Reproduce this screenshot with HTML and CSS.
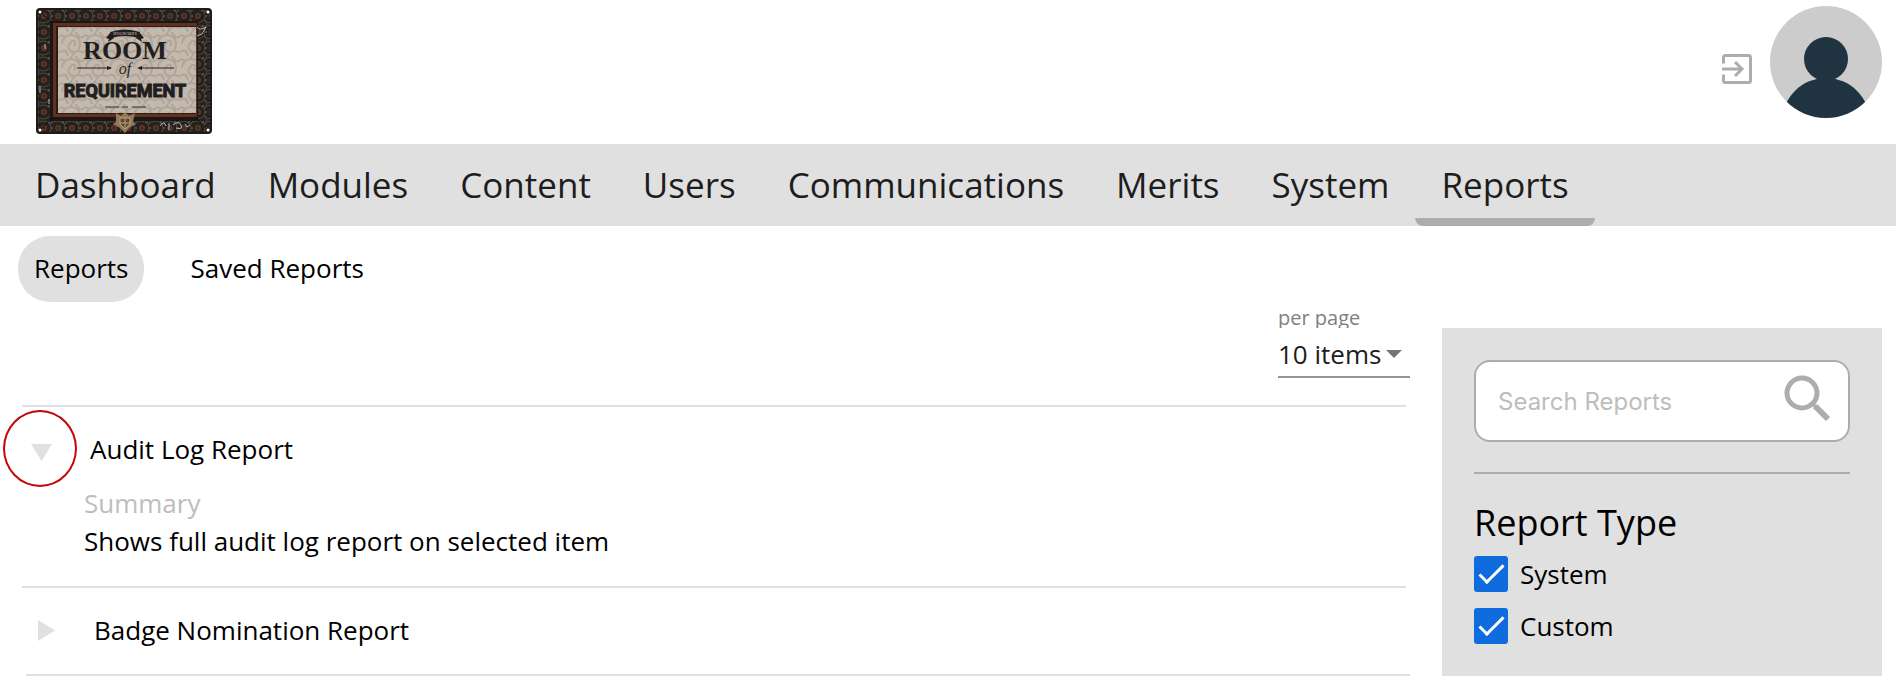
FILE: index.html
```html
<!DOCTYPE html>
<html lang="en">
<head>
    <meta charset="UTF-8">
    <meta name="viewport" content="width=device-width, initial-scale=1.0">
    <title>Reports</title>
    <link rel="stylesheet" href="styles.css">
</head>
<body>

<header class="header">
    <a class="logo" href="#" aria-label="Room of Requirement">
        <svg width="176" height="126" viewBox="0 0 176 126">
            <defs>
                <pattern id="carving" width="14" height="16" patternUnits="userSpaceOnUse">
                    <rect width="14" height="16" fill="#25211f"/>
                    <path d="M0 4q7-6 14 0M0 12q7 6 14 0M3 0q-6 8 0 16" fill="none" stroke="#50493f" stroke-width="1"/>
                    <circle cx="8" cy="8" r="3" fill="#5e3425"/>
                    <circle cx="8" cy="8" r="1" fill="#2a1d18"/>
                    <path d="M1 8h2M13 1v2" stroke="#81766a" stroke-width="1"/>
                </pattern>
                <pattern id="damask" width="24" height="24" patternUnits="userSpaceOnUse">
                    <rect width="24" height="24" fill="#c4b9ad"/>
                    <path d="M2 12c0-12 18-12 18 0s-14 9-11 1 9-3 5 1M12 0c-2 5-8 5-12 3M12 24c3-6 8-6 12-3M0 20q6-4 8 4M24 4q-5 4-8-4" fill="none" stroke="#b1a499" stroke-width="2"/>
                </pattern>
            </defs>
            <rect width="176" height="126" rx="4" fill="#1e1b1a"/>
            <rect x="2" y="2" width="172" height="122" rx="3" fill="url(#carving)"/>
            <rect x="14" y="13" width="148" height="100" fill="#1b1716"/>
            <rect x="17" y="15" width="144" height="94" fill="#61301f"/>
            <path d="M4 4l13 11M172 4l-13 11M4 122l13-13M172 122l-13-13" stroke="#141211" stroke-width="1"/>
            <rect x="20" y="18" width="140" height="88" fill="#2e1b15"/>
            <rect x="22" y="19" width="138" height="86" fill="url(#damask)"/>
            <circle cx="4" cy="4" r="1.5" fill="#fff"/>
            <circle cx="172" cy="4" r="1.5" fill="#fff"/>
            <circle cx="4" cy="122" r="1.5" fill="#fff"/>
            <circle cx="172" cy="122" r="1.5" fill="#fff"/>
            <path d="M74 24q15-5 30 0l-1 6q-14-4-28 0z" fill="#211e1e"/>
            <path d="M74 25l-4 5 3 1-1 3 6-4M104 25l4 5-3 1 1 3-6-4" fill="#211e1e"/>
            <text class="logo-ribbon" x="89" y="27">HOGWARTS</text>
            <text class="logo-room" x="89" y="51">ROOM</text>
            <text class="logo-of" x="89" y="66">of</text>
            <path d="M41 60h34M103 60h35" stroke="#29211f" stroke-width="1"/>
            <path d="M71 58l5 2-5 2zM106 58l-5 2 5 2z" fill="#211e1e"/>
            <text class="logo-requirement" x="89" y="89">REQUIREMENT</text>
            <path d="M69 99h14M96 99h14M86 99h6" stroke="#38302d" stroke-width="1"/>
            <path d="M80 105l5 3 4-4 4 4 6-3-2 9 3 2-7 4-4 5-5-5-7-4 3-2z" fill="#92795a"/>
            <path d="M84 110h10v6l-5 5-5-5zM89 110v11M84 115h10" fill="#5c4936" stroke="#bda27b" stroke-width="1"/>
            <path d="M124 118q4-6 6 0M133 115v7M137 117q6-5 8 0t-5 3M149 116l2 3 3-2M161 19q3 4 9 0l-4 7-5 2M9 36v5M4 78v7M13 91v5" fill="none" stroke="#b9b9b5" stroke-width="1"/>
        </svg>
    </a>
    <div class="account">
        <button class="logout" type="button" aria-label="Log out">
            <svg width="30" height="30" viewBox="0 0 30 30" fill="none" stroke="#adadad" stroke-width="3">
                <path d="M1.5 9.5v-6q0-2 2-2h23q2 0 2 2v23q0 2-2 2h-23q-2 0-2-2v-6"/>
                <path d="M0 15h20M13 8l7 7-7 7"/>
            </svg>
        </button>
        <a class="avatar" href="#" aria-label="Profile">
            <svg width="112" height="112" viewBox="0 0 112 112">
                <defs>
                    <clipPath id="avatar-clip"><circle cx="56" cy="56" r="56"/></clipPath>
                </defs>
                <g clip-path="url(#avatar-clip)">
                    <rect width="112" height="112" fill="#ccc"/>
                    <circle cx="56" cy="53" r="22" fill="#203340"/>
                    <circle cx="56" cy="116" r="44" fill="#203340"/>
                </g>
            </svg>
        </a>
    </div>
</header>

<nav class="main-nav">
    <a href="#">Dashboard</a>
    <a href="#">Modules</a>
    <a href="#">Content</a>
    <a href="#">Users</a>
    <a href="#">Communications</a>
    <a href="#">Merits</a>
    <a href="#">System</a>
    <a href="#" class="active">Reports</a>
</nav>

<nav class="sub-nav">
    <a href="#" class="active">Reports</a>
    <a href="#">Saved Reports</a>
</nav>

<main class="page">
    <section class="content">
        <div class="pager">
            <label for="per-page">per page</label>
            <div class="pager-select">
                <select id="per-page">
                    <option>10 items</option>
                    <option>25 items</option>
                    <option>50 items</option>
                </select>
            </div>
        </div>

        <div class="report open">
            <div class="report-head">
                <button class="toggle" type="button" aria-label="Collapse" aria-expanded="true">
                    <svg width="24" height="24" viewBox="0 0 24 24"><path d="M1 7h21L11.5 24z" fill="#e0e0e0"/></svg>
                    <span class="ring"></span>
                </button>
                <span>Audit Log Report</span>
            </div>
            <div class="report-body">
                <div class="report-label">Summary</div>
                <div>Shows full audit log report on selected item</div>
            </div>
        </div>

        <div class="report">
            <div class="report-head">
                <button class="toggle" type="button" aria-label="Expand" aria-expanded="false">
                    <svg width="24" height="24" viewBox="0 0 24 24"><path d="M4 2v21l17-10.500z" fill="#e0e0e0"/></svg>
                </button>
                <span>Badge Nomination Report</span>
            </div>
        </div>
    </section>

    <aside class="filters">
        <div class="search">
            <input type="text" placeholder="Search Reports" aria-label="Search Reports">
            <svg class="search-icon" width="48" height="48" viewBox="0 0 48 48" fill="none" stroke="#adadad">
                <circle cx="19" cy="19" r="15" stroke-width="5"/>
                <path d="M29 29l5 5" stroke-width="3"/>
                <path d="M32 32l13 13" stroke-width="6"/>
            </svg>
        </div>
        <hr>
        <h2>Report Type</h2>
        <label class="check"><input type="checkbox" checked>System</label>
        <label class="check"><input type="checkbox" checked>Custom</label>
    </aside>
</main>

</body>
</html>
```
FILE: styles.css
```css
* {
    box-sizing: border-box;
}
body {
    margin: 0;
    background: #fff;
    color: #000;
    font-family: "Open Sans", "Noto Sans", sans-serif;
    font-size: 26px;
    line-height: 36px;
}
a {
    color: inherit;
    text-decoration: none;
}
button {
    padding: 0;
    border: none;
    background: none;
    cursor: pointer;
}
svg {
    display: block;
}

/* header */
.header {
    display: flex;
    justify-content: space-between;
    align-items: flex-start;
    height: 144px;
    padding: 6px 14px 0 36px;
}
.logo {
    padding-top: 2px;
}
.logo text {
    fill: #211e1e;
    text-anchor: middle;
}
.logo .logo-ribbon {
    font: bold 4px "Liberation Serif", serif;
    fill: #b0a498;
}
.logo-room {
    font: bold 26px "Liberation Serif", serif;
}
.logo-of {
    font: italic 16px "Liberation Serif", serif;
}
.logo-requirement {
    font: bold 18px Roboto, sans-serif;
    stroke: #211e1e;
    stroke-width: 1px;
}
.account {
    display: flex;
    align-items: center;
    gap: 18px;
}
.logout {
    padding-top: 14px;
}

/* navigation */
.main-nav {
    display: flex;
    height: 82px;
    padding-left: 9px;
    background: #e0e0e0;
    color: #1d1d1d;
    font-size: 35px;
    line-height: 82px;
}
.main-nav a {
    position: relative;
    padding: 0 26px;
}
.main-nav .active::after {
    content: "";
    position: absolute;
    left: 0;
    right: 0;
    bottom: 0;
    height: 8px;
    border-radius: 0 0 8px 8px;
    background: #adadad;
}
.sub-nav {
    display: flex;
    gap: 30px;
    padding: 10px 18px 0;
    line-height: 64px;
}
.sub-nav a {
    padding: 0 16px 2px;
    border-radius: 32px;
}
.sub-nav .active {
    background: #e0e0e0;
}

/* reports */
.page {
    display: flex;
    align-items: flex-start;
    gap: 32px;
    padding: 0 14px 0 22px;
}
.content {
    flex: 1;
}
.pager {
    width: 132px;
    margin: 4px 0 27px auto;
}
.pager label {
    display: block;
    height: 22px;
    overflow: hidden;
    color: #808080;
    font-size: 20px;
    line-height: 24px;
}
.pager-select {
    position: relative;
}
.pager-select::after {
    content: "";
    position: absolute;
    top: 22px;
    right: 8px;
    border: 8px solid transparent;
    border-top-color: #757575;
    border-bottom: none;
    pointer-events: none;
}
.pager select {
    display: block;
    width: 100%;
    height: 50px;
    padding: 4px 0 0;
    border: none;
    border-bottom: 2px solid #949494;
    border-radius: 0;
    appearance: none;
    background: none;
    color: #1d1d1d;
    font: inherit;
}
.report {
    margin-left: 4px;
    padding: 24px 0 26px;
    border-bottom: 2px solid #e0e0e0;
}
.report.open {
    margin: 0 4px 0 0;
    border-top: 2px solid #e0e0e0;
}
.report-head {
    display: flex;
    align-items: center;
    gap: 28px;
}
.toggle {
    position: relative;
    display: flex;
    justify-content: center;
    align-items: center;
    width: 40px;
    height: 36px;
}
.ring {
    position: absolute;
    top: -21px;
    left: -19px;
    width: 74px;
    height: 77px;
    border: 2px solid #c00808;
    border-radius: 50%;
}
.report-body {
    padding: 17px 0 0 62px;
    line-height: 38px;
}
.report-label {
    color: #bdbdbd;
}

/* filters */
.filters {
    width: 440px;
    margin-top: 26px;
    padding: 32px;
    background: #e0e0e0;
}
.search {
    position: relative;
}
.search input {
    display: block;
    width: 100%;
    height: 82px;
    padding: 0 80px 0 22px;
    border: 2px solid #adadad;
    border-radius: 16px;
    background: #fff;
    font-family: Inter, sans-serif;
    font-size: 24px;
}
.search input::placeholder {
    color: #bdbdbd;
}
.search-icon {
    position: absolute;
    top: 14px;
    right: 19px;
}
.filters hr {
    height: 2px;
    margin: 30px 0 24px;
    border: none;
    background: #adadad;
}
.filters h2 {
    margin: 0 0 8px;
    font-size: 36px;
    font-weight: 400;
    line-height: 50px;
}
.check {
    display: flex;
    align-items: center;
    gap: 12px;
}
.check + .check {
    margin-top: 16px;
}
.check input {
    position: relative;
    width: 34px;
    height: 36px;
    margin: 0;
    border-radius: 3px;
    appearance: none;
    background: #fff;
}
.check input:checked {
    background: #0f6cde;
}
.check input:checked::after {
    content: "";
    position: absolute;
    top: 9px;
    left: 5px;
    width: 22px;
    height: 9px;
    border: solid #fff;
    border-width: 0 0 3px 3px;
    transform: rotate(-45deg);
}
```
